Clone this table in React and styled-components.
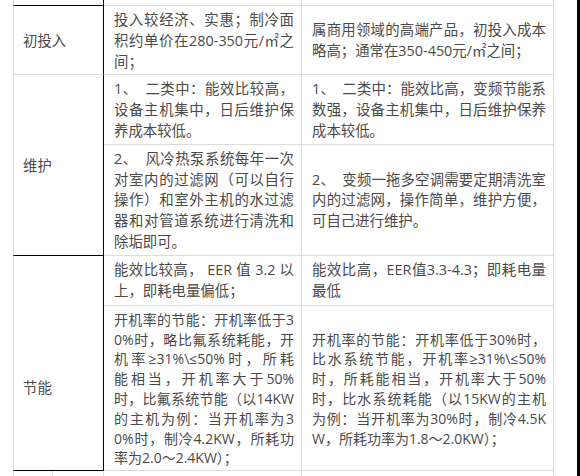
import React from "react";
import styled, { createGlobalStyle } from "styled-components";

const LIGHT = "#dddddd";
const DARK = "#000000";

const GlobalStyle = createGlobalStyle`
  html, body {
    margin: 0;
    padding: 0;
    background: #ffffff;
  }
  body {
    font-family: "Open Sans", "Noto Sans CJK SC", sans-serif;
  }
`;

const Page = styled.div`
  display: flex;
  width: 580px;
  height: 476px;
  overflow: hidden;
  background: #ffffff;
`;

const Sheet = styled.div`
  flex: none;
  padding-left: 13px;
`;

const Edge = styled.div`
  margin-left: auto;
  width: 3px;
  background: #000000;
`;

const Table = styled.table`
  border-collapse: separate;
  border-spacing: 0;
  table-layout: fixed;
  width: 541px;
  color: #4a4a4a;
  font-size: 14.4px;
  line-height: 20.8px;
`;

const Row = styled.tr`
  height: ${(p) => p.$h}px;
`;

const tone = (v) => (v === "dark" ? DARK : LIGHT);

const Cell = styled.td`
  box-sizing: border-box;
  border-left: ${(p) => (p.$left ? `1px solid ${LIGHT}` : "none")};
  border-right: 1px solid ${(p) => tone(p.$right)};
  border-bottom: ${(p) =>
    p.$bottom === "none" ? "none" : `1px solid ${tone(p.$bottom)}`};
  padding: ${(p) => (p.$stub ? "0" : "4px 7px 2px 10px")};
  vertical-align: middle;
`;

const HeadCell = styled(Cell)`
  padding: ${(p) => 4 + (p.$drop || 0)}px 6px 2px 9px;
`;

const Text = styled.div`
  font-size: ${(p) => (p.$small ? "14px" : "inherit")};
  line-height: ${(p) => (p.$small ? "19.8px" : "inherit")};
`;

const Line = styled.span`
  display: block;
  text-align: justify;
  &:not(:last-child) {
    text-align-last: justify;
  }
`;

function Lines({ lines, small }) {
  return (
    <Text $small={small}>
      {lines.map((l, i) => (
        <Line key={i}>{l}</Line>
      ))}
    </Text>
  );
}

export default function App() {
  return (
    <>
      <GlobalStyle />
      <Page>
        <Sheet>
          <Table>
            <colgroup>
              <col style={{ width: 40 }} />
              <col style={{ width: 51 }} />
              <col style={{ width: 198 }} />
              <col style={{ width: 252 }} />
            </colgroup>
            <tbody>
              <Row $h={6}>
                <Cell colSpan={2} $stub $left $right="dark" $bottom="dark" />
                <Cell $stub />
                <Cell $stub />
              </Row>
              <Row $h={69}>
                <HeadCell colSpan={2} $left $right="dark">
                  初投入
                </HeadCell>
                <Cell>
                  <Lines
                    lines={[
                      "投入较经济、实惠；制冷面",
                      "积约单价在280-350元/㎡之",
                      "间；",
                    ]}
                  />
                </Cell>
                <Cell>
                  <Lines
                    lines={[
                      "属商用领域的高端产品，初投入成本",
                      "略高；通常在350-450元/㎡之间；",
                    ]}
                  />
                </Cell>
              </Row>
              <Row $h={69}>
                <HeadCell
                  colSpan={2}
                  rowSpan={2}
                  $left
                  $right="dark"
                  $bottom="dark"
                >
                  维护
                </HeadCell>
                <Cell>
                  <Lines
                    lines={[
                      "1、\u2002二类中：能效比较高，",
                      "设备主机集中，日后维护保",
                      "养成本较低。",
                    ]}
                  />
                </Cell>
                <Cell>
                  <Lines
                    lines={[
                      "1、\u2002二类中：能效比高，变频节能系",
                      "数强，设备主机集中，日后维护保养",
                      "成本较低。",
                    ]}
                  />
                </Cell>
              </Row>
              <Row $h={109}>
                <Cell>
                  <Lines
                    lines={[
                      "2、\u2002风冷热泵系统每年一次",
                      "对室内的过滤网（可以自行",
                      "操作）和室外主机的水过滤",
                      "器和对管道系统进行清洗和",
                      "除垢即可。",
                    ]}
                  />
                </Cell>
                <Cell>
                  <Lines
                    lines={[
                      "2、\u2002变频一拖多空调需要定期清洗室",
                      "内的过滤网，操作简单，维护方便，",
                      "可自己进行维护。",
                    ]}
                  />
                </Cell>
              </Row>
              <Row $h={50}>
                <HeadCell
                  colSpan={2}
                  rowSpan={2}
                  $left
                  $right="dark"
                  $bottom="dark"
                  $drop={49}
                >
                  节能
                </HeadCell>
                <Cell>
                  <Lines
                    lines={["能效比较高， EER 值 3.2 以", "上，即耗电量偏低；"]}
                  />
                </Cell>
                <Cell>
                  <Lines lines={["能效比高，EER值3.3-4.3；即耗电量", "最低"]} />
                </Cell>
              </Row>
              <Row $h={165}>
                <Cell>
                  <Lines
                    small
                    lines={[
                      "开机率的节能：开机率低于3",
                      "0%时，略比氟系统耗能，开",
                      "机率≥31%\\≤50%时，所耗",
                      "能相当，开机率大于50%",
                      "时，比氟系统节能（以14KW",
                      "的主机为例：当开机率为3",
                      "0%时，制冷4.2KW，所耗功",
                      "率为2.0～2.4KW）；",
                    ]}
                  />
                </Cell>
                <Cell>
                  <Lines
                    small
                    lines={[
                      "开机率的节能：开机率低于30%时，",
                      "比水系统节能，开机率≥31%\\≤50%",
                      "时，所耗能相当，开机率大于50%",
                      "时，比水系统耗能（以15KW的主机",
                      "为例：当开机率为30%时，制冷4.5K",
                      "W，所耗功率为1.8～2.0KW）；",
                    ]}
                  />
                </Cell>
              </Row>
              <Row $h={20}>
                <Cell $stub $left $bottom="none" />
                <Cell $stub $bottom="none" />
                <Cell $stub $bottom="none" />
                <Cell $stub $bottom="none" />
              </Row>
            </tbody>
          </Table>
        </Sheet>
        <Edge />
      </Page>
    </>
  );
}
